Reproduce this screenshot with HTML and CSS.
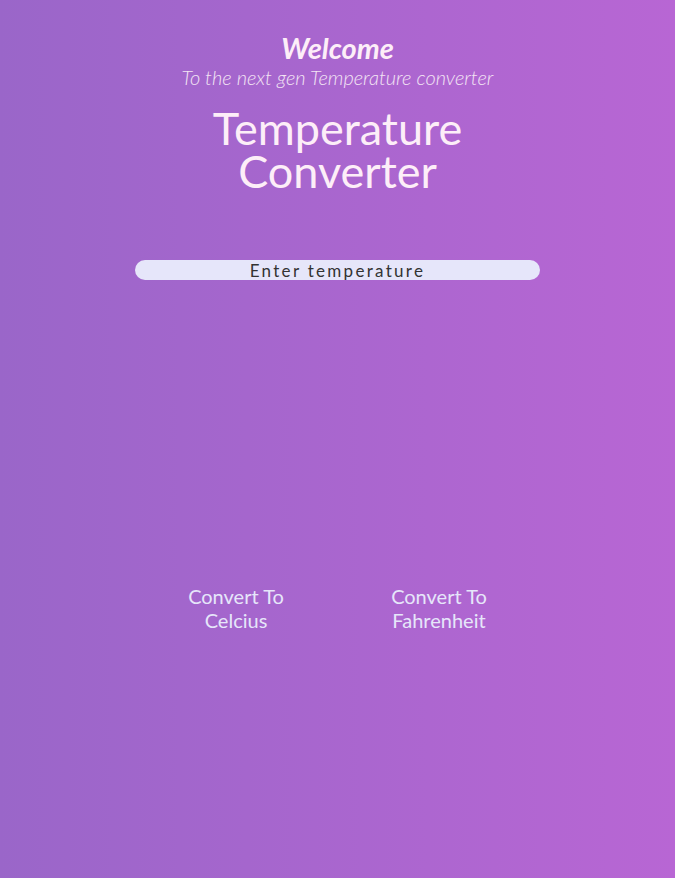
FILE: index.html
```html
<!DOCTYPE html>
<html>
<head>
<meta charset="utf-8">
<link rel="stylesheet" href="styles.css">
</head>
<body>
<main class="page">
  <header class="intro">
    <h2 class="welcome">Welcome</h2>
    <p class="tagline">To the next gen Temperature converter</p>
    <h1 class="title"><span class="title-line">Temperature</span><span class="title-line">Converter</span></h1>
  </header>
  <div class="field">
    <input class="temp-input" type="text" placeholder="Enter temperature">
  </div>
  <div class="actions">
    <button class="convert">Convert To<br>Celcius</button>
    <button class="convert">Convert To<br>Fahrenheit</button>
  </div>
</main>
</body>
</html>
```

FILE: styles.css
```css
html, body {
  margin: 0;
  height: 100%;
}
body {
  background: linear-gradient(to right, #9a66c9, #b866d4);
  font-family: "Lato", "Open Sans", sans-serif;
  color: #fdeef8;
}
.page {
  display: flex;
  flex-direction: column;
  align-items: center;
  padding-top: 32px;
}
.intro {
  display: flex;
  flex-direction: column;
  align-items: center;
  text-align: center;
}
.welcome {
  margin: 0;
  font-size: 29px;
  font-weight: 700;
  font-style: italic;
  line-height: 32px;
  color: #fdeef8;
}
.tagline {
  margin: 0;
  font-size: 20px;
  font-weight: 300;
  font-style: italic;
  line-height: 26px;
  color: #f3e4f4;
}
.title {
  margin: 17px 0 0;
  font-size: 45px;
  font-weight: 400;
  line-height: 43px;
  color: #fdeef8;
  display: flex;
  flex-direction: column;
  align-items: center;
}
.title-line {
  display: block;
  line-height: 43px;
}
.field {
  margin-top: 67px;
  width: 405px;
}
.temp-input {
  box-sizing: border-box;
  width: 100%;
  height: 20px;
  border: none;
  border-radius: 10px;
  background: #e6e6fa;
  padding: 0;
  text-align: center;
  font-family: "Lato", "Open Sans", sans-serif;
  font-size: 17px;
  letter-spacing: 2.3px;
  outline: none;
}
.temp-input::placeholder {
  color: #333333;
  opacity: 1;
}
.actions {
  margin-top: 304px;
  display: flex;
  gap: 90px;
  justify-content: center;
}
.convert {
  width: 113px;
  background: none;
  border: none;
  padding: 0;
  font-family: "Lato", "Open Sans", sans-serif;
  font-size: 20px;
  line-height: 24px;
  color: #e6e6fa;
  text-align: center;
}
```
